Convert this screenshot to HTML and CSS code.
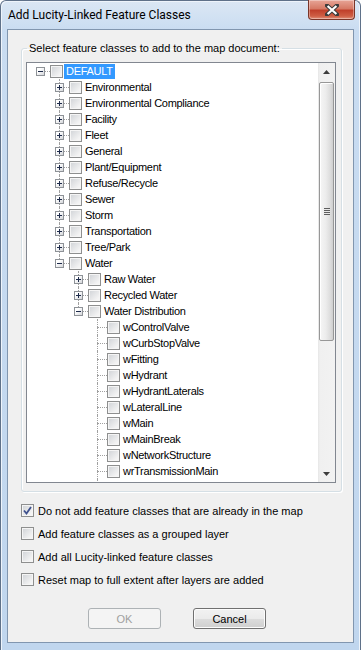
FILE: index.html
```html
<!DOCTYPE html>
<html>
<head>
  <title>Add Lucity-Linked Feature Classes</title>
  <link rel="stylesheet" href="styles.css">
</head>
<body>
  <div class="window">
    <div class="titlebar">
      <span class="title">Add Lucity-Linked Feature Classes</span>
      <button class="close-button">
        <svg width="14" height="12" viewBox="0 0 14 12">
          <path d="M2 1.5 L12 10.5 M12 1.5 L2 10.5" stroke="#3b3b3b" stroke-width="4.2" stroke-linecap="square"/>
          <path d="M2.6 2 L11.4 10 M11.4 2 L2.6 10" stroke="#ffffff" stroke-width="2.2"/>
        </svg>
      </button>
    </div>
    <div class="client">
      <fieldset class="group">
        <legend>Select feature classes to add to the map document:</legend>
        <div class="tree">
          <div class="tree-items">
            <div class="node l0"><span class="exp"><i class="box"></i></span><span class="cb"></span><span class="label selected">DEFAULT</span></div>
            <div class="node l1"><span class="exp full"><i class="box plus"></i></span><span class="cb"></span><span class="label">Environmental</span></div>
            <div class="node l1"><span class="exp full"><i class="box plus"></i></span><span class="cb"></span><span class="label">Environmental Compliance</span></div>
            <div class="node l1"><span class="exp full"><i class="box plus"></i></span><span class="cb"></span><span class="label">Facility</span></div>
            <div class="node l1"><span class="exp full"><i class="box plus"></i></span><span class="cb"></span><span class="label">Fleet</span></div>
            <div class="node l1"><span class="exp full"><i class="box plus"></i></span><span class="cb"></span><span class="label">General</span></div>
            <div class="node l1"><span class="exp full"><i class="box plus"></i></span><span class="cb"></span><span class="label">Plant/Equipment</span></div>
            <div class="node l1"><span class="exp full"><i class="box plus"></i></span><span class="cb"></span><span class="label">Refuse/Recycle</span></div>
            <div class="node l1"><span class="exp full"><i class="box plus"></i></span><span class="cb"></span><span class="label">Sewer</span></div>
            <div class="node l1"><span class="exp full"><i class="box plus"></i></span><span class="cb"></span><span class="label">Storm</span></div>
            <div class="node l1"><span class="exp full"><i class="box plus"></i></span><span class="cb"></span><span class="label">Transportation</span></div>
            <div class="node l1"><span class="exp full"><i class="box plus"></i></span><span class="cb"></span><span class="label">Tree/Park</span></div>
            <div class="node l1"><span class="exp last"><i class="box"></i></span><span class="cb"></span><span class="label">Water</span></div>
            <div class="node l2"><span class="exp full"><i class="box plus"></i></span><span class="cb"></span><span class="label">Raw Water</span></div>
            <div class="node l2"><span class="exp full"><i class="box plus"></i></span><span class="cb"></span><span class="label">Recycled Water</span></div>
            <div class="node l2"><span class="exp last"><i class="box"></i></span><span class="cb"></span><span class="label">Water Distribution</span></div>
            <div class="node l3"><span class="exp full"></span><span class="cb"></span><span class="label">wControlValve</span></div>
            <div class="node l3"><span class="exp full"></span><span class="cb"></span><span class="label">wCurbStopValve</span></div>
            <div class="node l3"><span class="exp full"></span><span class="cb"></span><span class="label">wFitting</span></div>
            <div class="node l3"><span class="exp full"></span><span class="cb"></span><span class="label">wHydrant</span></div>
            <div class="node l3"><span class="exp full"></span><span class="cb"></span><span class="label">wHydrantLaterals</span></div>
            <div class="node l3"><span class="exp full"></span><span class="cb"></span><span class="label">wLateralLine</span></div>
            <div class="node l3"><span class="exp full"></span><span class="cb"></span><span class="label">wMain</span></div>
            <div class="node l3"><span class="exp full"></span><span class="cb"></span><span class="label">wMainBreak</span></div>
            <div class="node l3"><span class="exp full"></span><span class="cb"></span><span class="label">wNetworkStructure</span></div>
            <div class="node l3"><span class="exp full"></span><span class="cb"></span><span class="label">wrTransmissionMain</span></div>
            <div class="node l3"><span class="exp full"></span></div>
          </div>
          <div class="scrollbar">
            <div class="sb-arrow">
              <svg width="7" height="4" viewBox="0 0 7 4"><path d="M3.5 0 L7 4 L0 4 Z" fill="#3d3d3d"/></svg>
            </div>
            <div class="sb-thumb"><div class="grip"></div></div>
            <div class="sb-track"></div>
            <div class="sb-arrow">
              <svg width="7" height="4" viewBox="0 0 7 4"><path d="M0 0 L7 0 L3.5 4 Z" fill="#3d3d3d"/></svg>
            </div>
          </div>
        </div>
      </fieldset>

      <div class="options">
        <label class="option"><span class="cb checked">
          <svg width="9" height="9" viewBox="0 0 9 9"><path d="M1 4.5 L3.5 7.5 L8 1" stroke="#3f518e" stroke-width="1.8" fill="none"/></svg>
        </span>Do not add feature classes that are already in the map</label>
        <label class="option"><span class="cb"></span>Add feature classes as a grouped layer</label>
        <label class="option"><span class="cb"></span>Add all Lucity-linked feature classes</label>
        <label class="option"><span class="cb"></span>Reset map to full extent after layers are added</label>
      </div>

      <div class="buttons">
        <button class="btn" disabled>OK</button>
        <button class="btn">Cancel</button>
      </div>
    </div>
  </div>
</body>
</html>
```

FILE: styles.css
```css
body {
  margin: 0;
  padding: 0;
  width: 361px;
  height: 650px;
  overflow: hidden;
  font-family: "Liberation Sans", Arial, sans-serif;
  font-size: 11px;
  color: #000000;
  background-color: #ffffff;
}
.window {
  box-sizing: border-box;
  width: 361px;
  height: 650px;
  border: 1px solid #5f7189;
  border-bottom: none;
  border-radius: 6px 6px 0 0;
  background: linear-gradient(#dbe7f4, #c9dcf1 30px, #c0d6ee);
  box-shadow: inset 1px 1px 0 #eef4fb, inset -1px 0 0 #eef4fb;
  padding: 0 6px 7px 6px;
  display: flex;
  flex-direction: column;
}
.titlebar {
  height: 28px;
  display: flex;
  align-items: flex-start;
  justify-content: space-between;
}
.title {
  font-family: Roboto, "Noto Sans", sans-serif;
  font-size: 12px;
  padding: 7px 0 0 1px;
  color: #000000;
}
.close-button {
  width: 47px;
  height: 20px;
  margin-top: -1px;
  margin-right: -1px;
  border: 1px solid #7a3528;
  border-top: none;
  border-radius: 0 0 4px 4px;
  background: linear-gradient(#e7a597, #d67a66 45%, #c0402b 55%, #cf5f45 85%, #e0917b);
  box-shadow: inset 0 0 0 1px rgba(255, 255, 255, 0.35);
  display: flex;
  align-items: center;
  justify-content: center;
  padding: 0;
}
.client {
  flex: 1;
  border: 1px solid #8196af;
  background-color: #f0f0f0;
  display: flex;
  flex-direction: column;
}
.group {
  margin: 12px 0 0 13px;
  width: 321px;
  box-sizing: border-box;
  padding: 0 0 8px 0;
  border: 1px solid #d5dfe5;
  border-radius: 3px;
  box-shadow: inset 1px 1px 0 #ffffff, 1px 1px 0 #ffffff;
}
.group legend {
  margin-left: 5px;
  padding: 0 2px;
  line-height: 13px;
}
.tree {
  margin: 7px 0 0 4px;
  width: 310px;
  height: 421px;
  box-sizing: border-box;
  border: 1px solid #828790;
  background-color: #ffffff;
  display: flex;
}
.tree-items {
  flex: 1;
  overflow: hidden;
  padding-left: 4px;
}
.node {
  height: 16px;
  display: flex;
  align-items: center;
}
.node.l1 { padding-left: 19px; }
.node.l2 { padding-left: 38px; }
.node.l3 { padding-left: 57px; }
.exp {
  position: relative;
  width: 19px;
  height: 16px;
  flex-shrink: 0;
  display: flex;
  align-items: center;
}
.exp::after {
  content: "";
  position: absolute;
  left: 9px;
  top: 8px;
  width: 10px;
  border-top: 1px dotted #a0a0a0;
}
.exp.full::before,
.exp.last::before {
  content: "";
  position: absolute;
  left: 9px;
  top: 0;
  height: 16px;
  border-left: 1px dotted #a0a0a0;
}
.exp.last::before {
  height: 8px;
}
.box {
  position: relative;
  z-index: 1;
  margin-left: 5px;
  width: 9px;
  height: 9px;
  box-sizing: border-box;
  border: 1px solid #8e9297;
  background:
    linear-gradient(#1d2a4a, #1d2a4a) center / 5px 1px no-repeat,
    linear-gradient(135deg, #ffffff 30%, #d4d6da);
}
.box.plus {
  background:
    linear-gradient(#1d2a4a, #1d2a4a) center / 5px 1px no-repeat,
    linear-gradient(#1d2a4a, #1d2a4a) center / 1px 5px no-repeat,
    linear-gradient(135deg, #ffffff 30%, #d4d6da);
}
.cb {
  width: 13px;
  height: 13px;
  box-sizing: border-box;
  flex-shrink: 0;
  border: 1px solid #8e8f8f;
  background: linear-gradient(135deg, #cfd2d6, #f4f4f4 80%);
  box-shadow: inset 0 0 0 1px #f5f5f5;
  display: flex;
  align-items: center;
  justify-content: center;
}
.label {
  margin-left: 1px;
  padding: 0 2px;
  line-height: 15px;
  white-space: nowrap;
  letter-spacing: -0.3px;
}
.label.selected {
  background-color: #3399ff;
  color: #ffffff;
}
.scrollbar {
  width: 17px;
  flex-shrink: 0;
  background: linear-gradient(90deg, #e6e6e6, #f0f0f0 2px, #f2f2f2);
  display: flex;
  flex-direction: column;
}
.sb-arrow {
  height: 17px;
  display: flex;
  align-items: center;
  justify-content: center;
}
.sb-thumb {
  margin: 2px 1px 0 1px;
  height: 259px;
  box-sizing: border-box;
  border: 1px solid #979797;
  border-radius: 2px;
  background: linear-gradient(90deg, #f6f6f6, #ececec 45%, #dcdcdc 80%, #cfcfcf);
  box-shadow: inset 1px 1px 0 #ffffff;
  display: flex;
  align-items: center;
  justify-content: center;
}
.grip {
  width: 6px;
  height: 7px;
  background: repeating-linear-gradient(#5e5e5e 0, #5e5e5e 1px, #e8e8e8 1px, #e8e8e8 2px);
}
.sb-track {
  flex: 1;
}
.options {
  margin: 7px 0 0 13px;
  display: flex;
  flex-direction: column;
}
.option {
  height: 23px;
  display: flex;
  align-items: center;
  gap: 4px;
  white-space: nowrap;
}
.buttons {
  margin-top: 17px;
  padding-left: 80px;
  display: flex;
  gap: 32px;
}
.btn {
  width: 73px;
  height: 21px;
  padding: 0;
  font-family: "Liberation Sans", Arial, sans-serif;
  font-size: 11px;
  color: #000000;
  border: 1px solid #707070;
  border-radius: 3px;
  background: linear-gradient(#f2f2f2, #ebebeb 50%, #dddddd 50%, #cfcfcf);
  box-shadow: inset 0 0 0 1px #fcfcfc;
}
.btn:disabled {
  color: #a0a0a0;
  border-color: #adb2b5;
  background: #f4f4f4;
  box-shadow: none;
}
```
